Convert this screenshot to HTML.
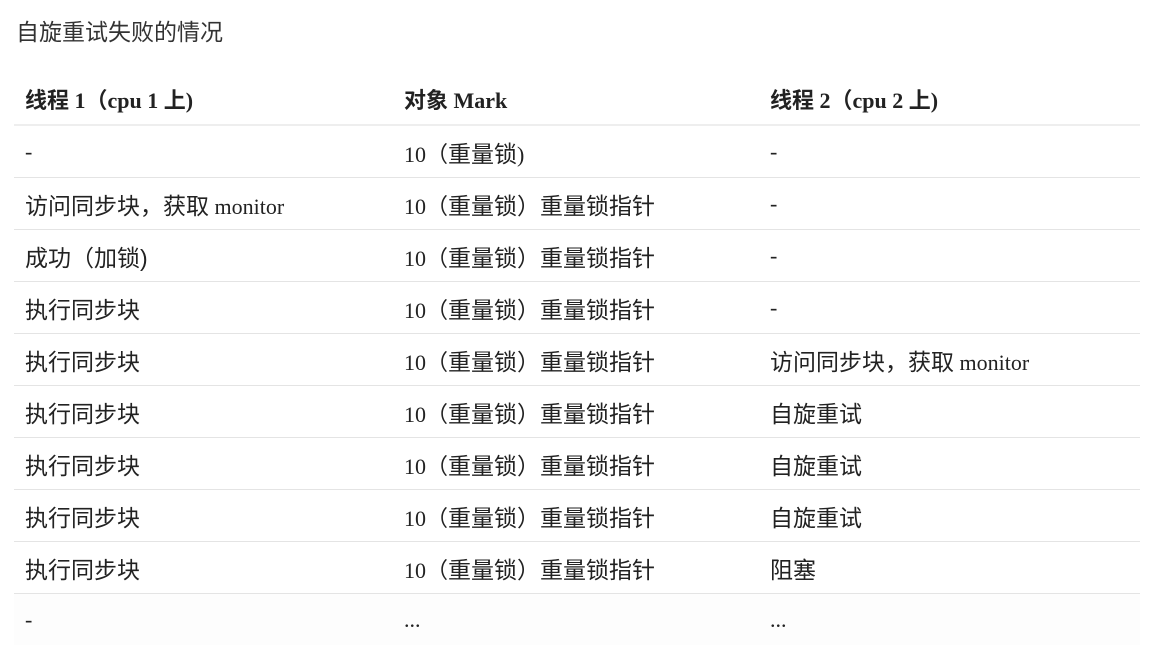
<!DOCTYPE html>
<html><head><meta charset="utf-8"><style>
body{margin:0;background:#fff;width:1162px;height:637px;overflow:hidden;font-family:"Liberation Serif","Noto Sans CJK SC",serif;color:#222;}
.t{position:absolute;left:16px;top:13px;font-size:23px;font-family:"Liberation Sans","Noto Sans CJK SC",sans-serif;color:#333;}
table{position:absolute;left:14px;top:73px;width:1126px;border-collapse:collapse;font-size:22px;}
td,th{height:51px;padding:0 0 0 11px;text-align:left;border-bottom:1px solid #e4e4e4;white-space:nowrap;}
th{font-weight:bold;height:51px;border-bottom:2px solid #eee;}
td:nth-child(1),th:nth-child(1){width:368px}
td:nth-child(2),th:nth-child(2){width:355px}
.c{font-family:"Liberation Sans","Noto Sans CJK SC",sans-serif;font-size:23px;}
tr.last td{border-bottom:none;background:#fdfdfd}
</style></head><body>
<div class="t">自旋重试失败的情况</div>
<table>
<tr><th>线程 1（cpu 1 上)</th><th>对象 Mark</th><th>线程 2（cpu 2 上)</th></tr>
<tr><td>-</td><td>10（<span class="c">重量锁</span>)</td><td>-</td></tr>
<tr><td><span class="c">访问同步块，获取</span> monitor</td><td>10（<span class="c">重量锁）重量锁指针</span></td><td>-</td></tr>
<tr><td class="c">成功（加锁)</td><td>10（<span class="c">重量锁）重量锁指针</span></td><td>-</td></tr>
<tr><td class="c">执行同步块</td><td>10（<span class="c">重量锁）重量锁指针</span></td><td>-</td></tr>
<tr><td class="c">执行同步块</td><td>10（<span class="c">重量锁）重量锁指针</span></td><td><span class="c">访问同步块，获取</span> monitor</td></tr>
<tr><td class="c">执行同步块</td><td>10（<span class="c">重量锁）重量锁指针</span></td><td class="c">自旋重试</td></tr>
<tr><td class="c">执行同步块</td><td>10（<span class="c">重量锁）重量锁指针</span></td><td class="c">自旋重试</td></tr>
<tr><td class="c">执行同步块</td><td>10（<span class="c">重量锁）重量锁指针</span></td><td class="c">自旋重试</td></tr>
<tr><td class="c">执行同步块</td><td>10（<span class="c">重量锁）重量锁指针</span></td><td class="c">阻塞</td></tr>
<tr class="last"><td>-</td><td>...</td><td>...</td></tr>
</table>
</body></html>
